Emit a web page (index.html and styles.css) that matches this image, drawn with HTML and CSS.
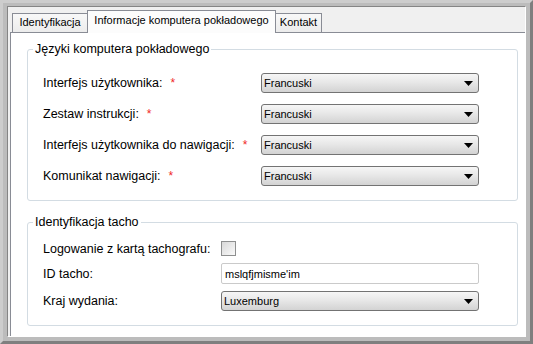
FILE: index.html
```html
<!DOCTYPE html>
<html lang="pl">
<head>
    <meta charset="UTF-8">
    <meta name="viewport" content="width=device-width, initial-scale=1.0">
    <title>Informacje komputera pokładowego</title>
    <link rel="stylesheet" href="styles.css">
</head>
<body>
    <div class="window">
        <div class="frame">
            <div class="tabs">
                <div class="tab tab-ident">Identyfikacja</div>
                <div class="tab active">Informacje komputera pokładowego</div>
                <div class="tab tab-contact">Kontakt</div>
            </div>
            <div class="panel">
                <fieldset class="group group-lang">
                    <legend>Języki komputera pokładowego</legend>
                    <div class="form form-lang">
                        <label>Interfejs użytkownika:<span class="req">*</span></label>
                        <div class="combo"><span>Francuski</span><svg width="9" height="5" viewBox="0 0 9 5"><polygon points="0,0 9,0 4.5,5"/></svg></div>
                        <label>Zestaw instrukcji:<span class="req">*</span></label>
                        <div class="combo"><span>Francuski</span><svg width="9" height="5" viewBox="0 0 9 5"><polygon points="0,0 9,0 4.5,5"/></svg></div>
                        <label>Interfejs użytkownika do nawigacji:<span class="req">*</span></label>
                        <div class="combo"><span>Francuski</span><svg width="9" height="5" viewBox="0 0 9 5"><polygon points="0,0 9,0 4.5,5"/></svg></div>
                        <label>Komunikat nawigacji:<span class="req">*</span></label>
                        <div class="combo"><span>Francuski</span><svg width="9" height="5" viewBox="0 0 9 5"><polygon points="0,0 9,0 4.5,5"/></svg></div>
                    </div>
                </fieldset>
                <fieldset class="group group-tacho">
                    <legend>Identyfikacja tacho</legend>
                    <div class="form form-tacho">
                        <label>Logowanie z kartą tachografu:</label>
                        <div class="check"></div>
                        <label>ID tacho:</label>
                        <input class="text" type="text" value="mslqfjmisme'im">
                        <label>Kraj wydania:</label>
                        <div class="combo"><span>Luxemburg</span><svg width="9" height="5" viewBox="0 0 9 5"><polygon points="0,0 9,0 4.5,5"/></svg></div>
                    </div>
                </fieldset>
            </div>
        </div>
    </div>
</body>
</html>
```

FILE: styles.css
```css
body {
    margin: 0;
    font-family: "Liberation Sans", Arial, sans-serif;
    color: #000;
}
.window {
    width: 533px;
    height: 344px;
    box-sizing: border-box;
    border: 3px solid;
    border-color: #cdcdcd #7f7f7f #7f7f7f #cdcdcd;
    background-color: #bcbcbc;
    padding: 3px 4px 4px 4px;
}
.frame {
    height: 100%;
    box-sizing: border-box;
    border: 1px solid;
    border-color: #858585 #fff #fff #858585;
    background-color: #f0f0f0;
    display: flex;
    flex-direction: column;
}
.tabs {
    display: flex;
    align-items: flex-end;
    height: 25px;
    padding-left: 4px;
    font-size: 11px;
}
.tab {
    box-sizing: border-box;
    height: 19px;
    line-height: 17px;
    text-align: center;
    border: 1px solid #898c95;
    border-bottom: none;
    background: linear-gradient(#f8f8f8, #ececec);
}
.tab-ident { width: 75px; border-right: none; }
.tab-contact { width: 46px; border-left: none; }
.tab.active {
    width: 189px;
    height: 23px;
    line-height: 19px;
    margin-bottom: -1px;
    background: #fcfcfc;
    position: relative;
    z-index: 1;
}
.panel {
    flex: 1;
    background-color: #fff;
    border-top: 1px solid #898c95;
    border-left: 1px solid #898c95;
    margin-left: 2px;
}
.group {
    margin: 9px 7px 0 16px;
    padding: 16px 38px 14px 15px;
    border: 1px solid #d3dce3;
    border-radius: 3px;
    font-size: 12.5px;
}
.group-tacho {
    margin-top: 14px;
    padding-top: 11px;
}
.group legend {
    margin-left: -10px;
    padding: 0 2px;
    line-height: 15px;
}
.form {
    display: grid;
    align-items: center;
}
.form-lang {
    grid-template-columns: 218px 1fr;
    row-gap: 11px;
}
.form-tacho {
    grid-template-columns: 178px 1fr;
    row-gap: 7px;
}
.req {
    color: #f02828;
    margin-left: 8px;
    font-size: 12px;
}
.combo {
    height: 20px;
    box-sizing: border-box;
    border: 1px solid #737373;
    border-radius: 3px;
    background: linear-gradient(#f6f6f6, #e8e8e8 45%, #d3d3d3);
    display: flex;
    align-items: center;
    justify-content: space-between;
    padding: 0 5px 0 2px;
    font-size: 11px;
}
.combo svg { fill: #000; }
.check {
    width: 15px;
    height: 15px;
    box-sizing: border-box;
    border: 1px solid #8e8f8f;
    background: linear-gradient(135deg, #d8d8d8, #fafafa);
}
.text {
    height: 21px;
    box-sizing: border-box;
    border: 1px solid #cacaca;
    border-radius: 2px;
    padding: 0 3px;
    margin: 0;
    font-family: "Liberation Sans", Arial, sans-serif;
    font-size: 11px;
    color: #000;
    width: 100%;
}
```
